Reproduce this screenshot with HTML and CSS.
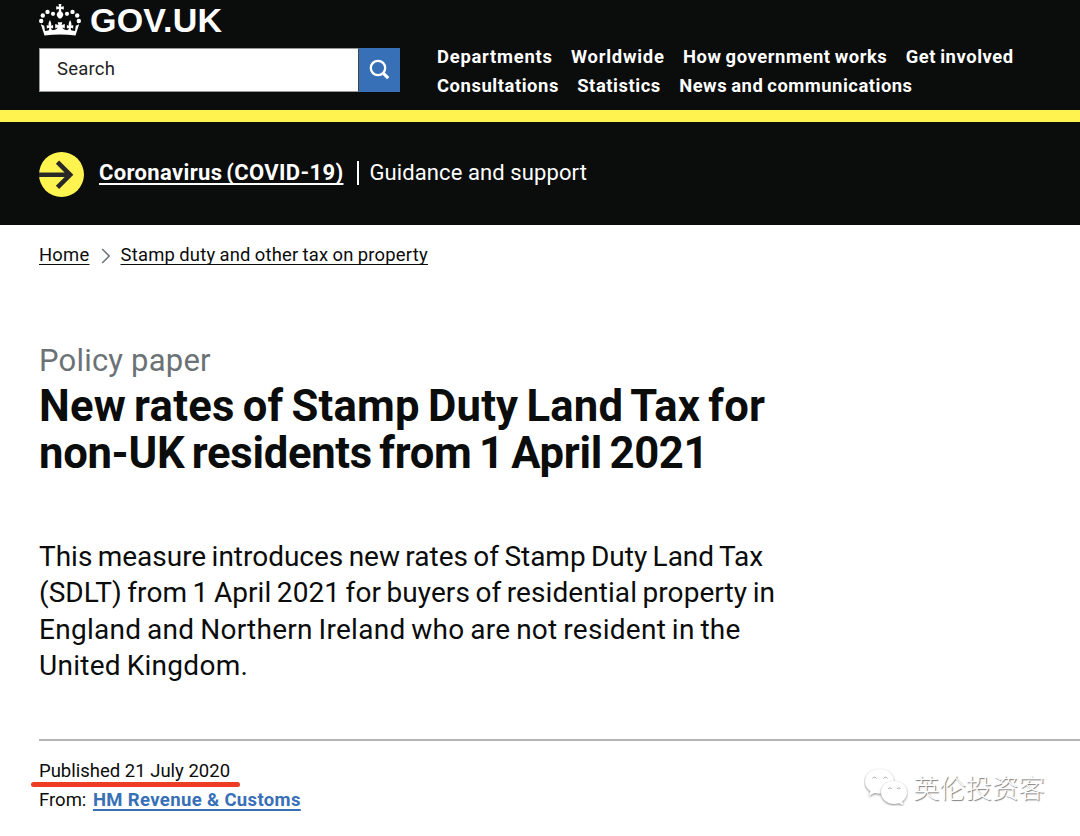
FILE: index.html
```
<!DOCTYPE html>
<html lang="en">
	<head>
		<meta charset="utf-8" />
		<meta name="viewport" content="width=device-width, initial-scale=1">
		<title>New rates of Stamp Duty Land Tax for non-UK residents from 1 April 2021 - GOV.UK</title>
		<link rel="stylesheet" href="styles.css">
	</head>
	<body>
		<header class="header">
			<div class="brand">
				<a href="#" class="logo">
					<svg class="crown" viewBox="0 0 42 32" width="42" height="32" fill="#fff">
						<path d="M19.6 0h2.8L22 2.700l2.800-.5v3.200L22 4.900l.3 2.500c1.700 1.200 2.300 2.500 1.800 4-.4 1.400-1.600 2-2.100 3.200h-2c-.5-1.200-1.700-1.800-2.100-3.200-.5-1.500.1-2.800 1.800-4l.3-2.500-2.800.5V2.200l2.800.5z" />
						<circle cx="14" cy="9.800" r="2.100" />
						<circle cx="28" cy="9.800" r="2.100" />
						<circle cx="8.500" cy="7.900" r="2.200" />
						<circle cx="33.500" cy="7.900" r="2.200" />
						<circle cx="3.800" cy="11.500" r="2.200" />
						<circle cx="38.200" cy="11.500" r="2.200" />
						<circle cx="2.200" cy="17" r="2.200" />
						<circle cx="39.800" cy="17" r="2.200" />
						<path d="M5.500 31.500L1.800 20.300l3.400 1.500.8 5.200 3.200-.6c1-.4 1.200-1.400.9-2.700l-2.300.8v-3.400l1.800.7c-.3-2 .1-3.800 1.300-5.500 1.200 1.700 1.600 3.500 1.300 5.500l1.900-.7v3.400l-1.900-.8c0 1.700.8 2.600 2.400 2.400 2-.1 3.300-.9 4.100-2.500l-2.500.7v-4.200l3.200.8-.7-2.700h4.600l-.7 2.700 3.200-.8v4.200l-2.500-.7c.8 1.600 2.100 2.400 4.100 2.500 1.600.2 2.400-.7 2.400-2.400l-1.900.8v-3.400l1.900.7c-.3-2 .1-3.800 1.300-5.500 1.200 1.700 1.600 3.500 1.300 5.500l1.800-.7v3.400l-2.300-.8c-.3 1.300-.1 2.300.9 2.700l3.200.6.8-5.200 3.400-1.500-3.700 11.200c-10-1.200-21-1.200-31 0z" />
					</svg>
					<span>GOV.UK</span>
				</a>
				<form class="search">
					<input type="text" class="search-input" placeholder="Search">
					<button type="button" class="search-btn" aria-label="Search">
						<svg viewBox="0 0 22 22" width="22" height="22" fill="none" stroke="#fff">
							<circle cx="9" cy="9" r="7.2" stroke-width="2.3" />
							<path d="M14.2 14.2l5 5" stroke-width="3.2" />
						</svg>
					</button>
				</form>
			</div>
			<nav class="nav">
				<div class="nav-row">
					<a href="#" class="wide">Departments</a>
					<a href="#" class="wide">Worldwide</a>
					<a href="#">How government works</a>
					<a href="#">Get involved</a>
				</div>
				<div class="nav-row">
					<a href="#">Consultations</a>
					<a href="#">Statistics</a>
					<a href="#" class="tight">News and communications</a>
				</div>
			</nav>
		</header>

		<div class="covid">
			<svg class="arrow" viewBox="0 0 45 45" width="45" height="45">
				<circle cx="22.5" cy="22.5" r="22.5" fill="#fff44f" />
				<path d="M0 22.8h31M18.5 10.2l12.6 12.6-12.6 12.6" fill="none" stroke="#272827" stroke-width="4.6" />
			</svg>
			<a href="#" class="covid-link">Coronavirus (COVID-19)</a>
			<span class="covid-text">Guidance and support</span>
		</div>

		<div class="breadcrumbs">
			<a href="#">Home</a>
			<svg viewBox="0 0 10 16" width="10" height="16" fill="none" stroke="#6f777b" stroke-width="1.6">
				<path d="M1.2 1l7 7-7 7" />
			</svg>
			<a href="#">Stamp duty and other tax on property</a>
		</div>

		<main class="main">
			<p class="context">Policy paper</p>
			<h1 class="title">
				<span>New rates of Stamp Duty Land Tax for</span>
				<span class="tight">non-UK residents from 1 April 2021</span>
			</h1>
			<p class="lead">
				<span class="tight">This measure introduces new rates of Stamp Duty Land Tax</span>
				<span class="normal">(SDLT) from 1 April 2021 for buyers of residential property in</span>
				<span>England and Northern Ireland who are not resident in the</span>
				<span>United Kingdom.</span>
			</p>
			<div class="meta">
				<p><span class="published">Published 21 July 2020</span></p>
				<p>From: <a href="#">HM Revenue &amp; Customs</a></p>
			</div>
		</main>

		<div class="watermark">
			<svg viewBox="0 0 44 38" width="44" height="38" fill="#fff">
				<path d="M15.5 1C7 1 1 6.500 1 13.500c0 4 2 7.500 5.400 9.800L5 28l5.500-3c2 .6 4 .7 6.500.7C23 25.500 30 20 30 13.500 30 6.500 24 1 15.500 1z" />
				<path d="M30 13c-7.500 0-13 5-13 11.200S22.500 36 30 36c1.800 0 3.500-.3 5-.8l4.500 2.300-1.200-4C41.200 31.300 43 28 43 24.400 43 18 37.500 13 30 13z" />
				<path class="eyes" d="M8.500 10.500a2.200 2.200 0 0 1 4 0M19.500 10.500a2.200 2.200 0 0 1 4 0M24 21a2 2 0 0 1 3.600 0M33 21a2 2 0 0 1 3.600 0" />
			</svg>
			<span>英伦投资客</span>
		</div>
	</body>
</html>
```
FILE: styles.css
```
* {
	padding: 0;
	margin: 0;
	box-sizing: border-box;
}

body {
	height: 836px;
	overflow: hidden;
	background-color: #fff;
	color: #0b0c0c;
	font-family: Roboto, "Liberation Sans", sans-serif;
}

.header {
	display: flex;
	height: 122px;
	padding-left: 39px;
	background-color: #0b0c0c;
	border-bottom: 12px solid #fff44f;
}

.brand {
	width: 361px;
	margin-right: 37px;
}

.logo {
	display: flex;
	height: 48px;
	color: #fff;
	font: bold 34px/40px "Liberation Sans", Arial, sans-serif;
	letter-spacing: .2px;
	text-decoration: none;
}

.crown {
	margin: 4px 9px 0 0;
}

.search {
	display: flex;
	height: 44px;
}

.search-input {
	width: 320px;
	padding: 0 17px 2px;
	border: 1px solid #999;
	border-right-color: #444;
	background-color: #fff;
	font: 18.5px Roboto, sans-serif;
	letter-spacing: .2px;
}

.search-input::placeholder {
	color: #222;
}

.search-btn {
	width: 41px;
	border: none;
	background-color: #3770b7;
}

.search-btn svg {
	display: block;
	margin: 0 auto;
}

.nav {
	padding-top: 43px;
}

.nav-row {
	display: flex;
	gap: 18.3px;
	line-height: 28.7px;
}

.nav a {
	color: #fff;
	font-size: 18.4px;
	font-weight: bold;
	letter-spacing: .56px;
	word-spacing: -1px;
	text-decoration: none;
	white-space: nowrap;
}

.nav .wide {
	letter-spacing: .76px;
}

.nav .tight {
	letter-spacing: .52px;
}

.covid {
	display: flex;
	height: 103px;
	padding: 30px 0 0 39px;
	background-color: #0b0c0c;
	color: #fff;
	font-size: 22px;
	line-height: 41px;
}

.arrow {
	margin-right: 15px;
}

.covid-link {
	color: #fff;
	font-weight: bold;
	letter-spacing: .35px;
	word-spacing: -2px;
	text-underline-offset: 3px;
	text-decoration-thickness: 2px;
	text-decoration-skip-ink: none;
}

.covid-text {
	height: 24px;
	margin: 9px 0 0 14px;
	padding-left: 10px;
	border-left: 2px solid #fff;
	line-height: 23px;
	letter-spacing: .1px;
}

.breadcrumbs {
	display: flex;
	align-items: center;
	height: 60px;
	padding: 0 0 2px 39px;
	font-size: 18.4px;
	letter-spacing: .25px;
	word-spacing: -.8px;
}

.breadcrumbs svg {
	margin: 3px 10px 0 11px;
}

.breadcrumbs a {
	color: #0b0c0c;
	text-underline-offset: 3px;
	text-decoration-thickness: 1px;
	text-decoration-skip-ink: none;
}

.main {
	padding: 58px 0 0 39px;
}

.context {
	color: #6b7276;
	font-size: 31px;
	line-height: 36px;
	letter-spacing: .2px;
}

.title {
	margin-top: 5px;
	font-size: 43.6px;
	line-height: 46.6px;
	letter-spacing: .24px;
	word-spacing: -3px;
}

.title span,
.lead span {
	display: block;
	white-space: nowrap;
}

.title .tight {
	letter-spacing: -.3px;
}

.lead {
	margin-top: 62px;
	font-size: 28px;
	line-height: 36.2px;
	letter-spacing: .28px;
	word-spacing: -1.5px;
}

.lead .tight {
	letter-spacing: -.02px;
}

.lead .normal {
	letter-spacing: .07px;
}

.meta {
	margin-top: 55px;
	padding-top: 16px;
	border-top: 2px solid #b5b5b5;
	font-size: 18.5px;
	line-height: 28.7px;
}

.meta a {
	margin-left: 2px;
	color: #3770b7;
	font-weight: bold;
	letter-spacing: .35px;
	text-underline-offset: 3px;
	text-decoration-thickness: 2px;
}

.published {
	position: relative;
}

/* marker stroke under the date */
.published::after {
	content: "";
	position: absolute;
	left: -8px;
	right: -10px;
	bottom: -5px;
	height: 5px;
	border-radius: 3px;
	background-color: #ee3c25;
}

.watermark {
	position: absolute;
	left: 864px;
	top: 768px;
	display: flex;
	align-items: center;
	gap: 5px;
	color: #fff;
	font: 300 26.3px/38px "Noto Sans CJK SC", sans-serif;
	text-shadow: 1px 1px 1px #777;
	white-space: nowrap;
}

.watermark path {
	filter: drop-shadow(0 1px 1px #888);
}

.watermark .eyes {
	fill: none;
	stroke: #aaa;
	filter: none;
}
```
